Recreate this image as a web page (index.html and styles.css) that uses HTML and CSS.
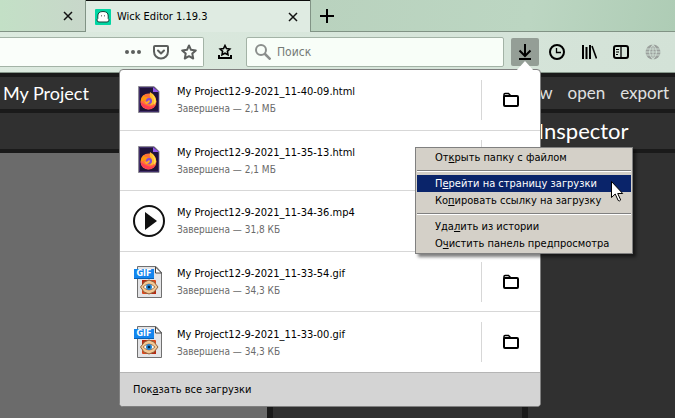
FILE: index.html
```html
<!DOCTYPE html>
<html lang="ru">

<head>
    <meta charset="UTF-8">
    <meta name="viewport" content="width=device-width, initial-scale=1.0">
    <title>Wick Editor 1.19.3</title>
    <link rel="stylesheet" href="styles.css">
</head>

<body>

    <!-- shared icons -->
    <svg class="sprite" aria-hidden="true">
        <symbol id="folder" viewBox="0 0 16 16">
            <path d="M1 5V2.500q0-1 1-1h3.500l2 2" fill="none" stroke="#000" stroke-width="1.500" />
            <rect x="1" y="4" width="14" height="10" rx="1" fill="none" stroke="#000" stroke-width="2" />
        </symbol>
        <symbol id="close" viewBox="0 0 10 10">
            <path d="M1 1l8 8M9 1L1 9" fill="none" stroke="#111" stroke-width="1.500" />
        </symbol>
        <symbol id="file-html" viewBox="0 0 32 32">
            <path d="M5.500 2.500H21l5 5v21H5.500z" fill="#20123a" stroke="#8f8c96" />
            <path d="M6.500 3.500H20M6.500 3.500v24h19V9" fill="none" stroke="#41306a" />
            <path d="M20 3v5h6z" fill="#9059e8" />
            <circle cx="15.500" cy="17.500" r="8" fill="#ff7139" />
            <path d="M7.500 18a8 8 0 0 0 15.500 2q-4 4-8 2-3-1-7.500-4z" fill="#ff3d55" />
            <path d="M17 8q-1 4 1 6 2 3-1 7 5 0 6-5-1-4-3-6-2-1-3-2z" fill="#ffbd2f" />
            <path d="M19 10q4 4 4 8l-2 3q1-5-2-11z" fill="#ffe14d" />
            <path d="M8 17q0-4 3-6l1 2h3l-2 3-3 1z" fill="#ff980e" />
            <circle cx="16" cy="17" r="3" fill="#8549d6" />
            <path d="M11 17q3 2 5-1l1 1q-1 3-4 3z" fill="#ffab28" />
        </symbol>
        <symbol id="file-video" viewBox="0 0 32 32">
            <circle cx="16" cy="16" r="15" fill="#fff" stroke="#111" stroke-width="2" />
            <path d="M12 7v18l12-9z" fill="#111" />
        </symbol>
        <symbol id="file-gif" viewBox="0 0 32 32">
            <path d="M4.500.5H23l5.500 6v25h-24z" fill="#e4e4e6" stroke="#707070" />
            <path d="M22.500 1v6h6z" fill="#fff" stroke="#444" />
            <rect x="9" y="14" width="14" height="14" rx="1" fill="#d9481e" />
            <path d="M9 14h5l-5 5zM23 28h-5l5-5z" fill="#b52a12" />
            <path d="M7.500 21l4-5 4.500-2 5 2 4 5-4 5-5 2-5-2z" fill="#f2c796" stroke="#8f6540" />
            <path d="M10 21q6-6 12 0-6 6-12 0z" fill="#fff" stroke="#a77b50" />
            <circle cx="16" cy="21" r="3" fill="#2584cf" />
            <circle cx="16" cy="21" r="1.300" fill="#06243f" />
        </symbol>
    </svg>

    <header class="browser">
        <div class="tabs">
            <div class="tab tab-old">
                <button class="close" aria-label="Закрыть вкладку"><svg><use href="#close" /></svg></button>
            </div>
            <div class="tab tab-active">
                <svg class="favicon" viewBox="0 0 16 16">
                    <rect width="16" height="16" rx="1" fill="#00d6a3" />
                    <path d="M4 13q-2 0-2-2 0-1 .8-1.500V7q0-4.500 5.200-4.500T13.200 7v2.500q.8.500.8 1.500 0 2-2 2z" fill="#fff" stroke="#17423a" />
                    <path d="M6.500 6v1.500M9.500 6v1.500" stroke="#888" />
                </svg>
                <span class="tab-title">Wick Editor 1.19.3</span>
                <button class="close" aria-label="Закрыть вкладку"><svg><use href="#close" /></svg></button>
            </div>
            <div class="tab-rest">
                <button class="new-tab" aria-label="Новая вкладка">
                    <svg viewBox="0 0 14 14"><path d="M7 0v14M0 7h14" stroke="#000" stroke-width="2" /></svg>
                </button>
            </div>
        </div>

        <div class="toolbar">
            <div class="url-bar">
                <button class="tool" aria-label="Действия на странице">
                    <svg viewBox="0 0 16 16" fill="#5c5f5d"><circle cx="2" cy="8" r="2" /><circle cx="8" cy="8" r="2" /><circle cx="14" cy="8" r="2" /></svg>
                </button>
                <button class="tool" aria-label="Сохранить в Pocket">
                    <svg viewBox="0 0 16 16" fill="none" stroke="#5c5f5d" stroke-width="2" stroke-linecap="round" stroke-linejoin="round"><path d="M2 2h12q1 0 1 1v4.500a7 7 0 0 1-14 0V3q0-1 1-1z" /><path d="M5 6.500l3 3 3-3" /></svg>
                </button>
                <button class="tool" aria-label="Добавить в закладки">
                    <svg viewBox="0 0 16 16" fill="none" stroke="#5c5f5d" stroke-width="2" stroke-linejoin="round"><path d="M8 1.500l2 4.300 4.800.6-3.500 3.200.9 4.900L8 12.200l-4.200 2.300.9-4.900L1.200 6.400 6 5.800z" /></svg>
                </button>
            </div>
            <button class="tool tool-saved" aria-label="Меню закладок">
                <svg viewBox="0 0 16 16" fill="none" stroke="#000" stroke-width="2"><path d="M8 1.500l1.500 3 3.300.5-2.400 2.300.6 3.400L8 9.200l-3 1.500.6-3.400L3.200 5l3.300-.5z" stroke-width="1.600" /><path d="M2 11v3h12v-3" /></svg>
            </button>
            <label class="search">
                <svg viewBox="0 0 16 16" fill="none" stroke="#8b8f8c" stroke-width="2"><circle cx="6" cy="6" r="5" /><path d="M9.500 9.500l6 6" stroke-width="2.500" /></svg>
                <input type="text" placeholder="Поиск" aria-label="Поиск">
            </label>
            <nav class="tools">
                <button class="tool tool-download" aria-label="Загрузки">
                    <svg viewBox="0 0 16 16" fill="none" stroke="#000" stroke-width="2"><path d="M8 0v12M2.500 6.500L8 12l5.500-5.500M2 15h12" /></svg>
                </button>
                <button class="tool" aria-label="Журнал">
                    <svg viewBox="0 0 16 16" fill="none" stroke="#000" stroke-width="2"><circle cx="8" cy="8" r="7" /><path d="M7.500 4v4.500H12" stroke-width="1.300" /></svg>
                </button>
                <button class="tool" aria-label="Библиотека">
                    <svg viewBox="0 0 16 16" fill="none" stroke="#000" stroke-width="2"><path d="M2 1v14M5.500 3v12M9 1v14" /><path d="M11 2l4.500 12.500" stroke-width="1.600" /></svg>
                </button>
                <button class="tool" aria-label="Боковая панель">
                    <svg viewBox="0 0 16 16" fill="none" stroke="#000" stroke-width="2"><rect x="1" y="2" width="14" height="12" rx="2" /><path d="M8 2v12" stroke-width="1.300" /><path d="M3 5.500h3M3 8h3M3 10.500h2" stroke-width="1" /></svg>
                </button>
                <button class="tool" aria-label="Язык" disabled>
                    <svg viewBox="0 0 16 16"><circle cx="8" cy="8" r="7.500" fill="#9ba09d" /><path d="M1 5h14M0 8h16M1 11h14M8 0v16M8 .5q-7 7.500 0 15M8 .5q7 7.500 0 15" fill="none" stroke="#d4e3d8" stroke-width=".9" /></svg>
                </button>
            </nav>
        </div>
    </header>

    <main class="editor">
        <div class="menu-bar">
            <span class="project-name">My Project</span>
            <nav class="menu-links">
                <a href="#">new</a>
                <a href="#">open</a>
                <a href="#">export</a>
            </nav>
        </div>
        <div class="workspace">
            <section class="stage">
                <div class="stage-bar"></div>
                <div class="columns">
                    <div class="canvas"></div>
                    <div class="timeline"></div>
                </div>
            </section>
            <aside class="inspector">
                <h2>Inspector</h2>
                <div class="inspector-body"></div>
            </aside>
        </div>
    </main>

    <section class="downloads" aria-label="Загрузки">
        <ul class="download-list">
            <li>
                <div class="file-icon"><svg><use href="#file-html" /></svg></div>
                <div class="file">
                    <span class="file-name">My Project12-9-2021_11-40-09.html</span>
                    <span class="file-info">Завершена — 2,1 МБ</span>
                </div>
                <button class="open-folder" aria-label="Открыть папку с файлом"><svg><use href="#folder" /></svg></button>
            </li>
            <li>
                <div class="file-icon"><svg><use href="#file-html" /></svg></div>
                <div class="file">
                    <span class="file-name">My Project12-9-2021_11-35-13.html</span>
                    <span class="file-info">Завершена — 2,1 МБ</span>
                </div>
                <button class="open-folder" aria-label="Открыть папку с файлом"><svg><use href="#folder" /></svg></button>
            </li>
            <li>
                <div class="file-icon"><svg><use href="#file-video" /></svg></div>
                <div class="file">
                    <span class="file-name">My Project12-9-2021_11-34-36.mp4</span>
                    <span class="file-info">Завершена — 31,8 КБ</span>
                </div>
                <button class="open-folder" aria-label="Открыть папку с файлом"><svg><use href="#folder" /></svg></button>
            </li>
            <li>
                <div class="file-icon"><svg><use href="#file-gif" /></svg><span class="badge">GIF</span></div>
                <div class="file">
                    <span class="file-name">My Project12-9-2021_11-33-54.gif</span>
                    <span class="file-info">Завершена — 34,3 КБ</span>
                </div>
                <button class="open-folder" aria-label="Открыть папку с файлом"><svg><use href="#folder" /></svg></button>
            </li>
            <li>
                <div class="file-icon"><svg><use href="#file-gif" /></svg><span class="badge">GIF</span></div>
                <div class="file">
                    <span class="file-name">My Project12-9-2021_11-33-00.gif</span>
                    <span class="file-info">Завершена — 34,3 КБ</span>
                </div>
                <button class="open-folder" aria-label="Открыть папку с файлом"><svg><use href="#folder" /></svg></button>
            </li>
        </ul>
        <button class="show-all">Пок<u>а</u>зать все загрузки</button>
    </section>

    <div class="context-menu" role="menu">
        <button role="menuitem">От<u>к</u>рыть папку с файлом</button>
        <hr>
        <button role="menuitem" class="selected">П<u>е</u>рейти на страницу загрузки</button>
        <button role="menuitem">Ко<u>п</u>ировать ссылку на загрузку</button>
        <hr>
        <button role="menuitem">Уда<u>л</u>ить из истории</button>
        <button role="menuitem">О<u>ч</u>истить панель предпросмотра</button>
    </div>

    <svg class="cursor" viewBox="0 0 13 21">
        <path d="M.5.500v16l3.700-3.500 3 6.500q1.500 1 2.500-.5l-3-6.500h5z" fill="#fff" stroke="#000" />
    </svg>

</body>

</html>
```
FILE: styles.css
```css
* {
    box-sizing: border-box;
}

body {
    display: flex;
    flex-direction: column;
    position: relative;
    min-height: 100vh;
    margin: 0;
    font-family: "DejaVu Sans Condensed", Tahoma, sans-serif;
    font-size: 11px;
    color: #000;
    background-color: #1a1a1a;
}

button {
    display: flex;
    align-items: center;
    justify-content: center;
    padding: 0;
    border: none;
    background: none;
    font: inherit;
    color: inherit;
}

u {
    text-underline-offset: 1px;
}

.sprite {
    position: absolute;
    width: 0;
    height: 0;
}

/* browser */
.browser {
    background: linear-gradient(100deg, #dceadf, #d3e2d7);
    border-bottom: 1px solid #87988b;
}

.tabs {
    display: flex;
    height: 32px;
}

.tab {
    display: flex;
    align-items: center;
}

.tab-old {
    width: 86px;
    justify-content: flex-end;
    padding-right: 12px;
    background: linear-gradient(90deg, #c3e0c6, #c8d7ca);
    border-right: 1px solid #819385;
    border-bottom: 1px solid #819385;
}

.tab-active {
    width: 224px;
    padding: 0 12px 0 9px;
    gap: 6px;
    background-color: #dfebe2;
    border-top: 1px solid #0b0b0b;
}

.tab-title {
    flex: 1;
    white-space: nowrap;
}

.favicon {
    width: 16px;
    height: 16px;
}

.close svg {
    width: 10px;
    height: 10px;
}

.tab-rest {
    display: flex;
    flex: 1;
    padding-left: 9px;
    background: linear-gradient(100deg, #b9d2be, #bcd6c2 60%, #aeccb5);
    border-left: 1px solid #819385;
    border-bottom: 1px solid #819385;
}

.new-tab svg {
    width: 14px;
    height: 14px;
}

.toolbar {
    display: flex;
    align-items: center;
    height: 40px;
    padding-right: 8px;
}

.tool {
    width: 28px;
    height: 28px;
    border-radius: 2px;
}

.tool svg {
    width: 16px;
    height: 16px;
}

.url-bar {
    display: flex;
    align-items: center;
    justify-content: flex-end;
    width: 204px;
    height: 30px;
    background-color: #fafefa;
    border: 1px solid #a3b3a6;
    border-left: none;
    border-radius: 0 2px 2px 0;
}

.tool-saved {
    margin: 0 7px;
}

.search {
    display: flex;
    flex: 1;
    align-items: center;
    gap: 6px;
    height: 30px;
    padding-left: 8px;
    background-color: #f8fef8;
    border: 1px solid #a3b3a6;
    border-radius: 2px;
}

.search svg {
    width: 16px;
    height: 16px;
}

.search input {
    flex: 1;
    min-width: 0;
    padding: 0;
    border: none;
    outline: none;
    background: none;
    font: inherit;
    font-size: 12px;
}

.search input::placeholder {
    color: #757a76;
}

.tools {
    display: flex;
    gap: 4px;
    margin-left: 7px;
}

.tool-download {
    background-color: #949e96;
}

/* wick editor page */
.editor {
    display: flex;
    flex: 1;
    flex-direction: column;
    gap: 4px;
    padding-top: 4px;
    font-family: Lato, "Open Sans", sans-serif;
    color: #fff;
}

.menu-bar {
    display: flex;
    align-items: center;
    justify-content: space-between;
    height: 32px;
    padding: 0 6px 0 3px;
    background-color: #303030;
}

.project-name {
    font-size: 18px;
}

.menu-links {
    display: flex;
    gap: 15px;
}

.menu-links a {
    color: #e0e0e0;
    font-size: 17px;
    line-height: 20px;
    text-decoration: none;
}

.workspace {
    display: flex;
    flex: 1;
    gap: 6px;
}

.stage {
    display: flex;
    flex: 1;
    flex-direction: column;
    gap: 4px;
}

.stage-bar {
    height: 36px;
    background-color: #303030;
}

.columns {
    display: flex;
    flex: 1;
    gap: 6px;
}

.canvas {
    flex: 1;
    background-color: #6b6b6b;
}

.timeline {
    width: 249px;
    background-color: #303030;
}

.inspector {
    display: flex;
    flex-direction: column;
    gap: 4px;
    width: 147px;
}

.inspector h2 {
    height: 36px;
    margin: 0;
    padding-left: 10px;
    font-size: 22px;
    font-weight: 400;
    line-height: 36px;
    background-color: #303030;
}

.inspector-body {
    flex: 1;
    background-color: #303030;
}

/* downloads panel */
.downloads {
    display: flex;
    flex-direction: column;
    position: absolute;
    top: 69px;
    right: 134px;
    width: 422px;
    min-height: 338px;
    background-color: #fff;
    border: 1px solid #808080;
    border-radius: 4px;
}

.downloads::before {
    content: "";
    position: absolute;
    top: -9px;
    right: 6px;
    width: 18px;
    height: 10px;
    background-color: #fff;
    clip-path: polygon(50% 0, 100% 100%, 0 100%);
}

.download-list {
    display: flex;
    flex: 1;
    flex-direction: column;
    margin: 0;
    padding: 0;
    list-style: none;
}

.download-list li {
    display: flex;
    flex: 1;
    align-items: center;
    padding-left: 13px;
    border-bottom: 1px solid #d7d7d7;
}

.download-list li:last-child {
    border-bottom-color: #b5b5b5;
}

.file-icon {
    position: relative;
    width: 32px;
    height: 32px;
}

.file-icon svg {
    display: block;
    width: 32px;
    height: 32px;
}

.badge {
    position: absolute;
    top: 3px;
    left: 1px;
    width: 20px;
    background-color: #1385ee;
    border-bottom: 1px solid #0860b5;
    color: #fff;
    font-family: "DejaVu Sans", sans-serif;
    font-size: 8px;
    font-weight: 700;
    line-height: 9px;
    text-align: center;
}

.file {
    display: flex;
    flex: 1;
    flex-direction: column;
    gap: 3px;
    padding: 2px 0 0 12px;
}

.file-name {
    line-height: 14px;
}

.file-info {
    color: #6a6a6a;
    font-size: 10px;
    line-height: 14px;
}

.open-folder {
    width: 59px;
    height: 40px;
    border-left: 1px solid #d7d7d7;
}

.open-folder svg {
    width: 16px;
    height: 16px;
}

.show-all {
    justify-content: flex-start;
    height: 33px;
    padding-left: 13px;
    background-color: #d4d4d4;
    border-radius: 0 0 3px 3px;
    white-space: pre;
}

/* context menu */
.context-menu {
    position: absolute;
    top: 147px;
    right: 42px;
    width: 218px;
    padding: 1px;
    background-color: #d4d0c8;
    border: 1px solid #808080;
    box-shadow: 3px 3px 3px rgba(0, 0, 0, 0.5);
}

.context-menu button {
    justify-content: flex-start;
    width: 100%;
    height: 17px;
    padding-left: 18px;
    white-space: pre;
}

.context-menu .selected {
    color: #fff;
    background-color: #0a246a;
}

.context-menu hr {
    height: 2px;
    margin: 4px 0 3px;
    border: none;
    border-top: 1px solid #808080;
    border-bottom: 1px solid #fff;
}

.cursor {
    position: absolute;
    top: 181px;
    right: 51px;
    width: 13px;
    height: 21px;
}
```
